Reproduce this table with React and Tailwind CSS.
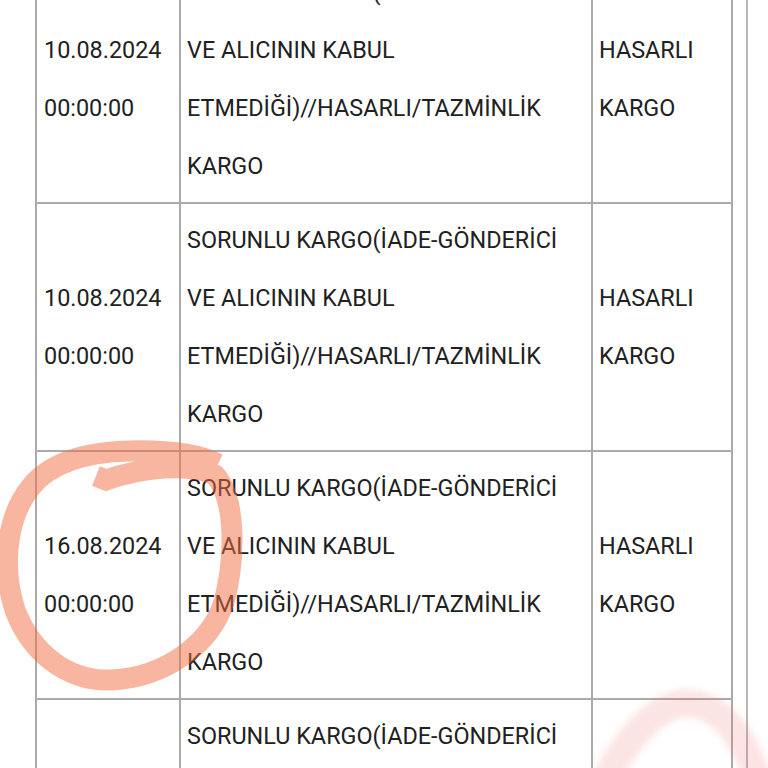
import React from 'react';

const rows = [
  { date: '10.08.2024', time: '00:00:00' },
  { date: '10.08.2024', time: '00:00:00' },
  { date: '16.08.2024', time: '00:00:00' },
  { date: '', time: '' },
];

const desc = [
  'SORUNLU KARGO(İADE-GÖNDERİCİ',
  'VE ALICININ KABUL',
  'ETMEDİĞİ)//HASARLI/TAZMİNLİK',
  'KARGO',
];

export default function App() {
  return (
    <div className="relative h-[768px] w-[768px] overflow-hidden bg-white font-['Roboto',sans-serif] text-[23.4px] leading-[58px] text-[#212121]">
      <div className="-mt-[46px] w-[748px] border-r-2 border-[#b8b8b8] pl-[35px]">
        <table className="border-collapse">
          <tbody>
            {rows.map((row, i) => (
              <tr key={i}>
                <td className="w-[144px] border-2 border-[#ababab] py-[7px] pl-[7px] pr-[4px] align-middle">
                  {row.date && (
                    <>
                      <div>{row.date}</div>
                      <div>{row.time}</div>
                    </>
                  )}
                </td>
                <td className="w-[412px] border-2 border-[#ababab] py-[7px] pl-[6px] pr-[4px] align-top whitespace-nowrap">
                  {(i === 3 ? desc.slice(0, 1) : desc).map((line) => (
                    <div key={line}>{line}</div>
                  ))}
                </td>
                <td className="w-[140px] border-2 border-[#ababab] py-[7px] pl-[6px] pr-[4px] align-middle">
                  {i < 3 && (
                    <>
                      <div>HASARLI</div>
                      <div>KARGO</div>
                    </>
                  )}
                </td>
              </tr>
            ))}
          </tbody>
        </table>
      </div>

      {/* hand-drawn marks over the screenshot */}
      <svg className="pointer-events-none absolute left-0 top-0" width="768" height="768" viewBox="0 0 768 768">
        <defs>
          <filter id="soft" x="-20%" y="-20%" width="140%" height="140%">
            <feGaussianBlur stdDeviation="3" />
          </filter>
        </defs>
        <path
          d="M 96 476 L 106 480 C 140 468, 190 462, 215 475 C 237 500, 235 560, 224 602 C 210 645, 165 677, 112 680 C 65 682, 30 650, 15 610 C 2 570, 5 520, 30 488 C 50 462, 85 452, 130 451 C 170 450, 200 455, 218 464"
          fill="none"
          stroke="#f26b3f"
          strokeOpacity="0.5"
          strokeWidth="21"
          strokeLinecap="butt"
          strokeLinejoin="miter"
        />
        <path
          d="M 596 800 C 630 725, 665 700, 693 704 C 722 708, 742 732, 762 790"
          fill="none"
          stroke="#ee5a5a"
          strokeOpacity="0.16"
          strokeWidth="28"
          filter="url(#soft)"
        />
      </svg>
    </div>
  );
}
